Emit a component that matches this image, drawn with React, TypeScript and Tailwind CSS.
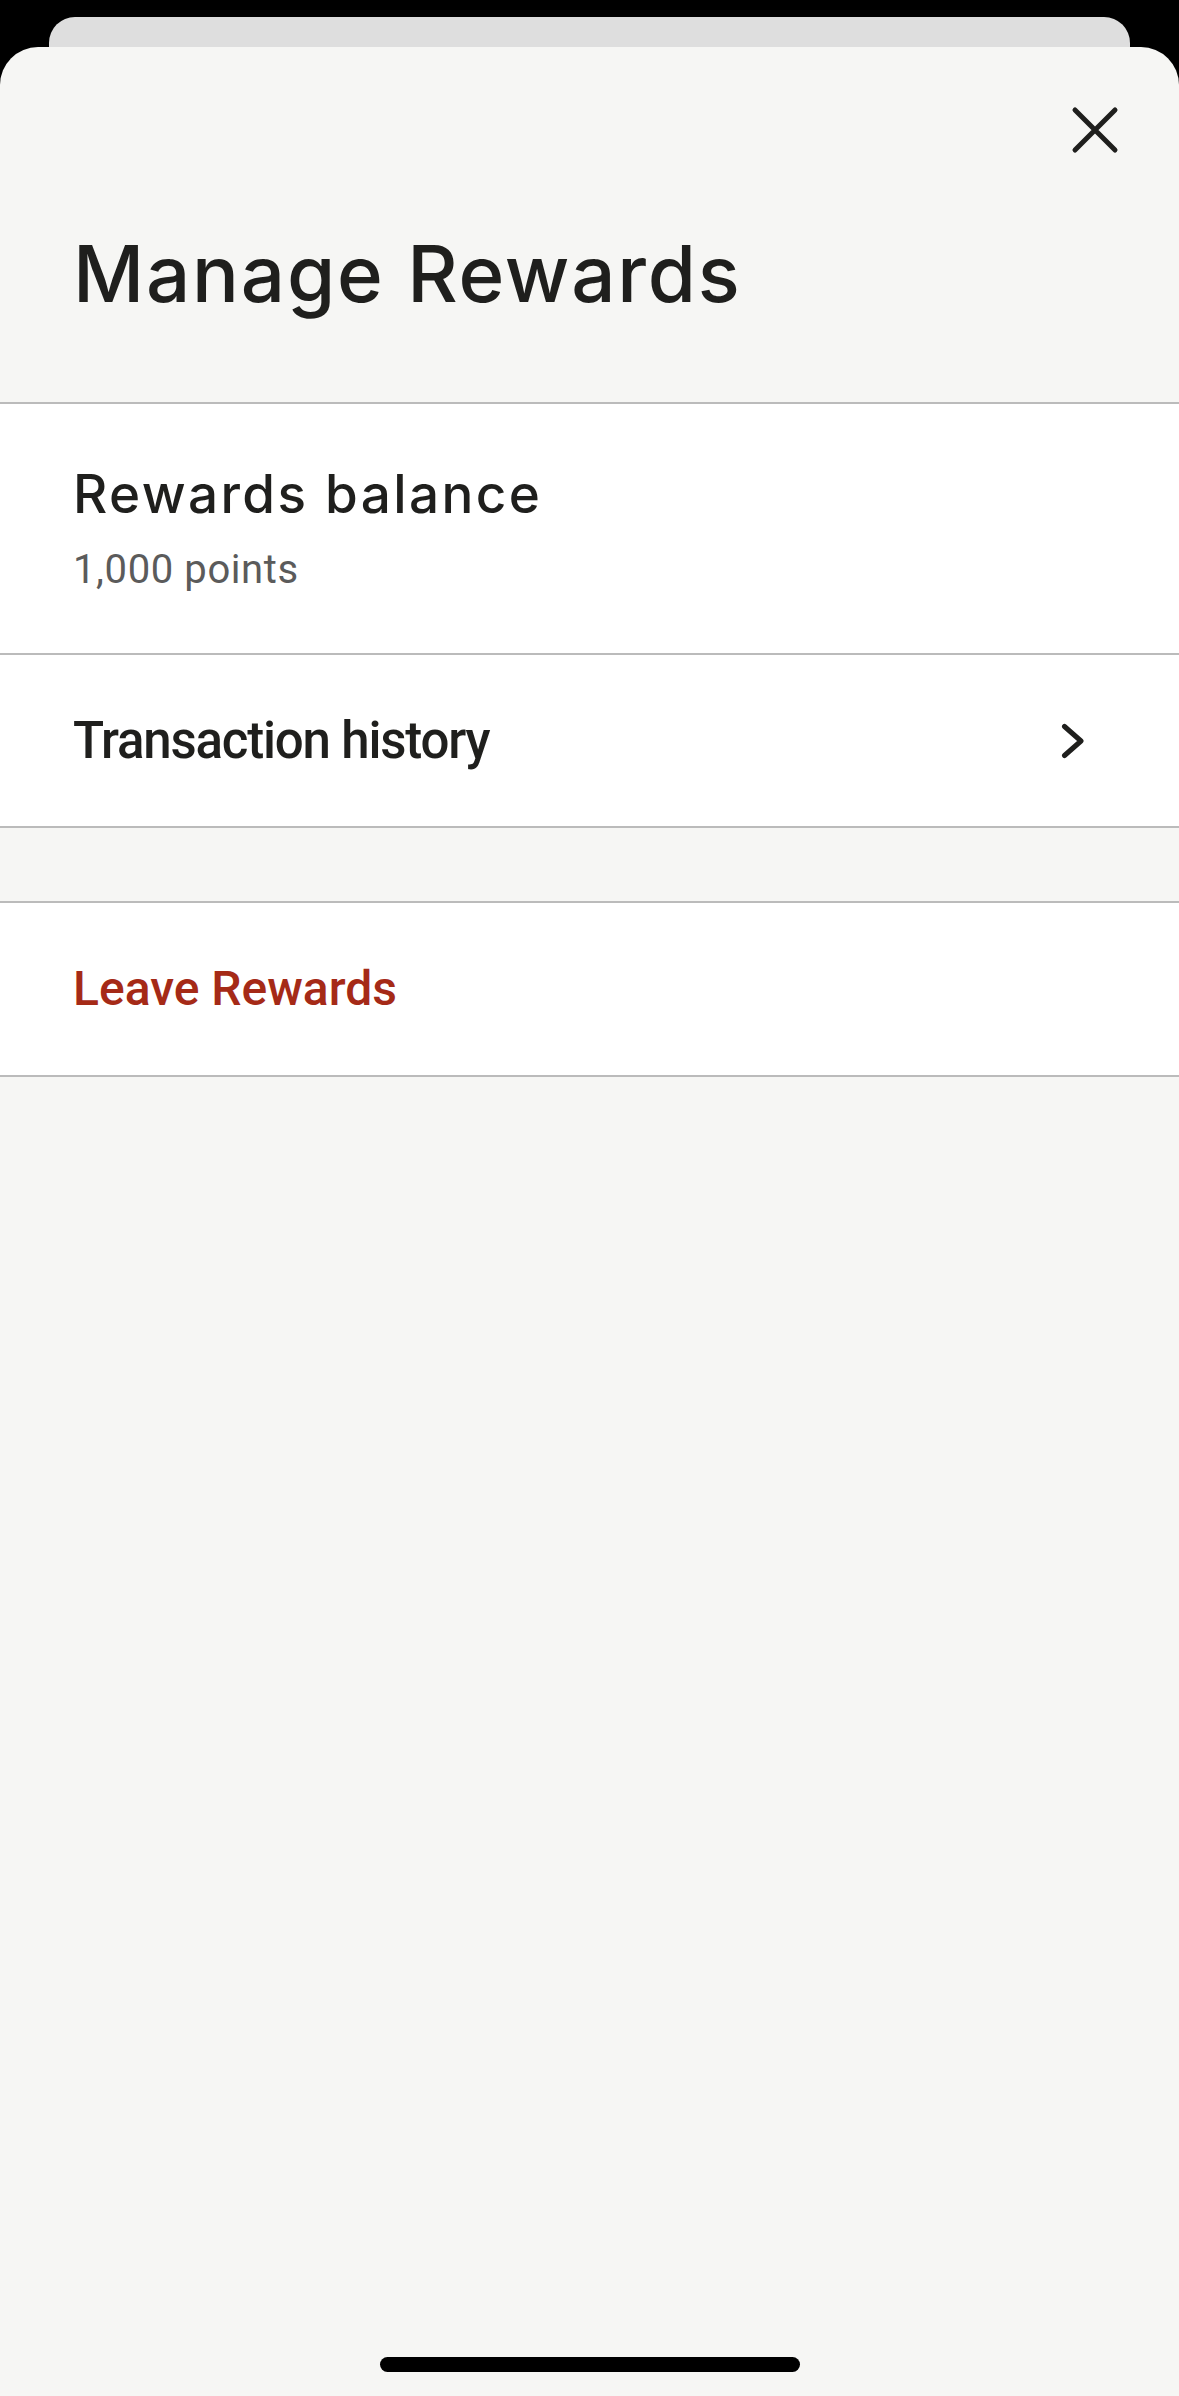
import React from "react";

const sans = "font-['Inter','Liberation_Sans',sans-serif]";
const system = "font-['Roboto','Inter','Liberation_Sans',sans-serif]";

function CloseIcon() {
  return (
    <svg width="48" height="48" viewBox="0 0 48 48" fill="none" stroke="#1f1f1d" strokeWidth="5" strokeLinecap="round">
      <path d="M4 4L44 44M44 4L4 44" />
    </svg>
  );
}

function Chevron() {
  return (
    <svg width="24" height="36" viewBox="0 0 24 36" fill="none" stroke="#1f1f1d" strokeWidth="5" strokeLinecap="round" strokeLinejoin="round">
      <path d="M3.5 3.5L20 18L3.5 32.5" />
    </svg>
  );
}

export default function App() {
  return (
    <div className={`w-[1179px] h-[2396px] bg-black pt-[17px] flex flex-col overflow-hidden ${sans}`}>
      {/* card peeking behind the sheet */}
      <div className="h-[30px] mx-[49px] rounded-t-[26px] bg-[#dedede] shrink-0" />

      {/* sheet */}
      <div className="flex-1 flex flex-col rounded-t-[38px] bg-[#f6f6f4]">
        {/* header */}
        <div className="h-[357px] shrink-0 flex flex-col border-b-2 border-[#bbbbbb]">
          <div className="flex justify-end pt-[59px] pr-[60px]">
            <button type="button" aria-label="Close">
              <CloseIcon />
            </button>
          </div>
          <h1 className="mt-[81px] pl-[73px] text-[78px] leading-[78px] font-medium tracking-[1.8px] text-[#1f1f1d]">
            Manage Rewards
          </h1>
        </div>

        {/* balance */}
        <div className="bg-white border-b-2 border-[#bbbbbb] pl-[73px] pt-[64px] pb-[65px] flex flex-col">
          <div className="text-[53px] leading-[53px] font-medium tracking-[2.4px] text-[#1f1f1d]">Rewards balance</div>
          <div className={`mt-[30px] text-[40px] leading-[37px] tracking-[0.6px] text-[#5b5b5b] ${system}`}>1,000 points</div>
        </div>

        {/* history */}
        <div className={`bg-white border-b-2 border-[#bbbbbb] h-[173px] flex items-center justify-between pl-[73px] pr-[94px] ${system}`}>
          <span className="text-[51px] leading-[51px] font-medium tracking-[-1.2px] text-[#1f1f1d]">Transaction history</span>
          <Chevron />
        </div>

        {/* spacer */}
        <div className="h-[75px] border-b-2 border-[#bbbbbb]" />

        {/* leave */}
        <div className={`bg-white border-b-2 border-[#bbbbbb] h-[174px] flex items-center pl-[73px] ${system}`}>
          <span className="text-[48px] leading-[48px] font-medium text-[#a52a17]">Leave Rewards</span>
        </div>

        <div className="flex-1" />

        {/* home indicator */}
        <div className="flex justify-center pb-[24px]">
          <div className="w-[420px] h-[15px] rounded-full bg-black" />
        </div>
      </div>
    </div>
  );
}
